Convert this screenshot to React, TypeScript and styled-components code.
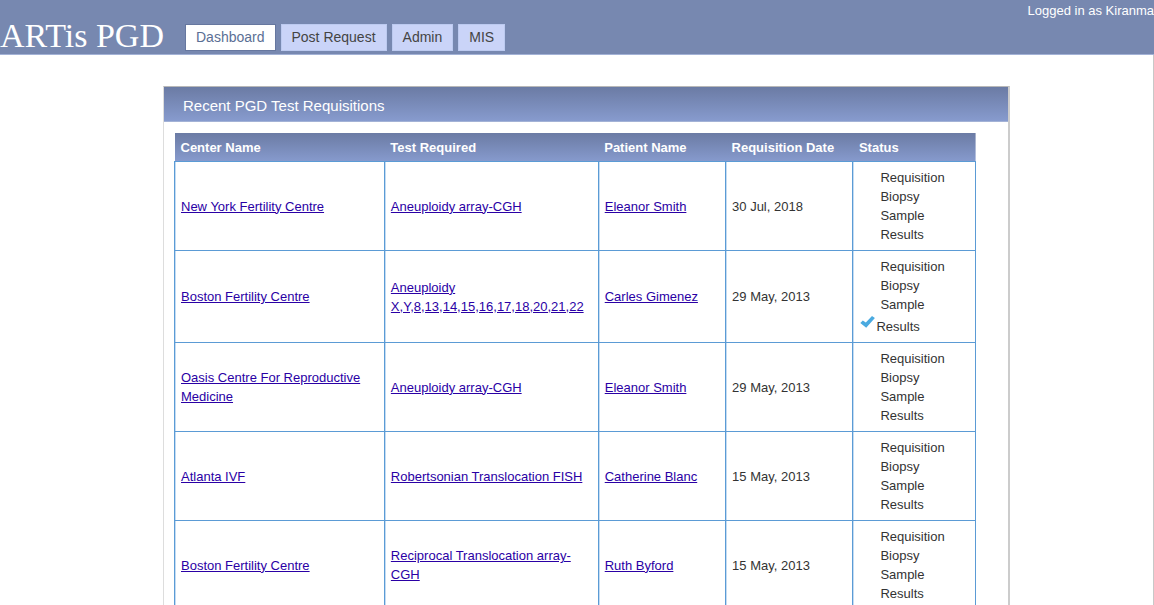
import React from "react";
import styled, { createGlobalStyle } from "styled-components";

const GlobalStyle = createGlobalStyle`
  *, *::before, *::after { box-sizing: border-box; }
  body {
    margin: 0;
    background: #fff;
    color: #333;
    font-family: "Liberation Sans", Arial, sans-serif;
    font-size: 13px;
    line-height: 19px;
  }
`;

const Page = styled.div`
  min-height: 100vh;
  border-right: 1px solid #c8c8c8;
`;

const Header = styled.header`
  display: flex;
  align-items: flex-start;
  height: 55px;
  margin-right: -1px;
  background: #7788b0;
  border-bottom: 1px solid #a3b2d6;
`;

const Logo = styled.h1`
  margin: 0;
  padding-top: 16px;
  width: 185px;
  color: #fff;
  font: 400 34px/40px "Liberation Serif", "Times New Roman", serif;
  white-space: nowrap;
`;

const Nav = styled.nav`
  display: flex;
  gap: 5px;
  padding-top: 24px;
`;

const Tab = styled.a<{ $active?: boolean }>`
  padding: 0 10px;
  border: 1px solid ${(p) => (p.$active ? "#66779f" : "#bccaf0")};
  background: ${(p) => (p.$active ? "#fff" : "#cad4f8")};
  color: ${(p) => (p.$active ? "#5b6f95" : "#444")};
  font-size: 14px;
  line-height: 25px;
  text-decoration: none;
`;

const Login = styled.div`
  margin-left: auto;
  padding-top: 1px;
  color: #fff;
  white-space: nowrap;
`;

const Main = styled.main`
  padding: 31px 0 0 20px;
`;

const Panel = styled.section`
  max-width: 847px;
  margin: 0 auto;
  border: 1px solid #ddd;
  border-top-color: #b8b8b8;
  border-right: 2px solid #ccc;
`;

const PanelTitle = styled.h2`
  margin: 0;
  padding: 4px 19px 0;
  background: linear-gradient(#6b7ba4, #879bce);
  border-bottom: 1px solid #a3b2d6;
  color: #fff;
  font-size: 15px;
  font-weight: 400;
  line-height: 30px;
`;

const PanelBody = styled.div`
  padding: 11px 32px 11px 10px;
`;

const Table = styled.table`
  width: 100%;
  table-layout: fixed;
  border-collapse: collapse;

  thead {
    background: linear-gradient(#6b7ba4, #879bce);
  }
`;

const HeadCell = styled.th`
  padding: 5px 6px 4px;
  color: #fff;
  text-align: left;
  white-space: nowrap;
`;

const Cell = styled.td`
  padding: 6px;
  border: 1px solid #5b9bd5;
  box-shadow: inset 1px 0 #c5dcf2;
`;

const Link = styled.a`
  color: #2a00a5;
`;

const Steps = styled.ul`
  margin: 0;
  padding: 0;
  list-style: none;
`;

const Step = styled.li<{ $done?: boolean }>`
  display: flex;
  padding-left: ${(p) => (p.$done ? 1 : 21)}px;
  line-height: ${(p) => (p.$done ? 26 : 19)}px;
  height: ${(p) => (p.$done ? 22 : 19)}px;
`;

const Check = () => (
  <svg width="16" height="16" viewBox="0 0 16 16" role="img" aria-label="Done">
    <path d="M0.3 9 2.8 6.4 5.8 8.4 12 2 14.9 4 6.2 13.8Z" fill="#4aaae0" />
  </svg>
);

const tabs = ["Dashboard", "Post Request", "Admin", "MIS"];
const steps = ["Requisition", "Biopsy", "Sample", "Results"];
const columns = [
  { name: "Center Name", width: "26.2%" },
  { name: "Test Required", width: "26.7%" },
  { name: "Patient Name", width: "15.9%" },
  { name: "Requisition Date", width: "15.9%" },
  { name: "Status", width: "15.3%" },
];

const rows = [
  { center: "New York Fertility Centre", test: "Aneuploidy array-CGH", patient: "Eleanor Smith", date: "30 Jul, 2018" },
  { center: "Boston Fertility Centre", test: "Aneuploidy X,Y,8,13,14,15,16,17,18,20,21,22", patient: "Carles Gimenez", date: "29 May, 2013", done: "Results" },
  { center: "Oasis Centre For Reproductive Medicine", test: "Aneuploidy array-CGH", patient: "Eleanor Smith", date: "29 May, 2013" },
  { center: "Atlanta IVF", test: "Robertsonian Translocation FISH", patient: "Catherine Blanc", date: "15 May, 2013" },
  { center: "Boston Fertility Centre", test: "Reciprocal Translocation array-CGH", patient: "Ruth Byford", date: "15 May, 2013" },
];

export default function App() {
  return (
    <Page>
      <GlobalStyle />
      <Header>
        <Logo>ARTis PGD</Logo>
        <Nav>
          {tabs.map((t, i) => (
            <Tab key={t} href="#" $active={i === 0}>{t}</Tab>
          ))}
        </Nav>
        <Login>Logged in as Kiranma</Login>
      </Header>
      <Main>
        <Panel>
          <PanelTitle>Recent PGD Test Requisitions</PanelTitle>
          <PanelBody>
            <Table>
              <colgroup>
                {columns.map((c) => <col key={c.name} style={{ width: c.width }} />)}
              </colgroup>
              <thead>
                <tr>
                  {columns.map((c) => <HeadCell key={c.name} scope="col">{c.name}</HeadCell>)}
                </tr>
              </thead>
              <tbody>
                {rows.map((r, i) => (
                  <tr key={i}>
                    <Cell><Link href="#">{r.center}</Link></Cell>
                    <Cell><Link href="#">{r.test}</Link></Cell>
                    <Cell><Link href="#">{r.patient}</Link></Cell>
                    <Cell>{r.date}</Cell>
                    <Cell>
                      <Steps>
                        {steps.map((s) => (
                          <Step key={s} $done={s === r.done}>
                            {s === r.done && <Check />}
                            {s}
                          </Step>
                        ))}
                      </Steps>
                    </Cell>
                  </tr>
                ))}
              </tbody>
            </Table>
          </PanelBody>
        </Panel>
      </Main>
    </Page>
  );
}
